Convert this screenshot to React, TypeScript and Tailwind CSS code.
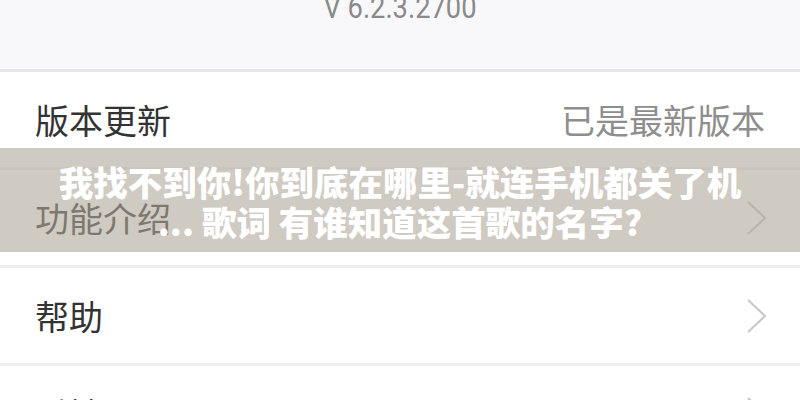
import React from "react";

const Chevron = () => (
  <svg width="22" height="34" viewBox="0 0 22 34" fill="none">
    <polyline points="2,1 19,17 2,33" stroke="#c9c9c9" strokeWidth="2.2" strokeLinejoin="miter" />
  </svg>
);

const Row = ({ label, right, chevron }: { label: string; right?: string; chevron?: boolean }) => (
  <div className="h-[95px] bg-white flex items-center justify-between pl-[35px] pr-[32px] shrink-0">
    <span className="text-[34px] leading-none text-[#333333]">{label}</span>
    {right ? <span className="text-[34px] leading-none text-[#8e8e8e] mr-[3px]">{right}</span> : null}
    {chevron ? <Chevron /> : null}
  </div>
);

const Sep = () => <div className="h-[3px] bg-[#efefef] shrink-0" />;

export default function App() {
  return (
    <div
      className="relative w-[800px] h-[400px] overflow-hidden bg-white flex flex-col"
      style={{ fontFamily: '"Noto Sans CJK SC", "Noto Sans", sans-serif' }}
    >
      <div className="h-[69px] bg-[#f8f8fa] shrink-0 flex justify-center">
        <span
          className="text-[31px] leading-none text-[#8a8a8a] -mt-[8px] scale-x-[0.88]"
          style={{ fontFamily: 'Roboto, "Noto Sans", sans-serif' }}
        >
          V 6.2.3.2700
        </span>
      </div>
      <div className="h-[3px] bg-[#e6e6e6] shrink-0" />
      <Row label="版本更新" right="已是最新版本" />
      <Sep />
      <Row label="功能介绍" chevron />
      <Sep />
      <Row label="帮助" chevron />
      <Sep />
      <Row label="反馈" chevron />

      <div className="absolute left-0 right-0 top-[148px] h-[104px] bg-[rgba(175,167,153,0.6)] flex flex-col items-center justify-center text-white font-black text-[34.5px] leading-[40px] pt-[2px]">
        <div>我找不到你!你到底在哪里-就连手机都关了机</div>
        <div>... 歌词 有谁知道这首歌的名字?</div>
      </div>
    </div>
  );
}
